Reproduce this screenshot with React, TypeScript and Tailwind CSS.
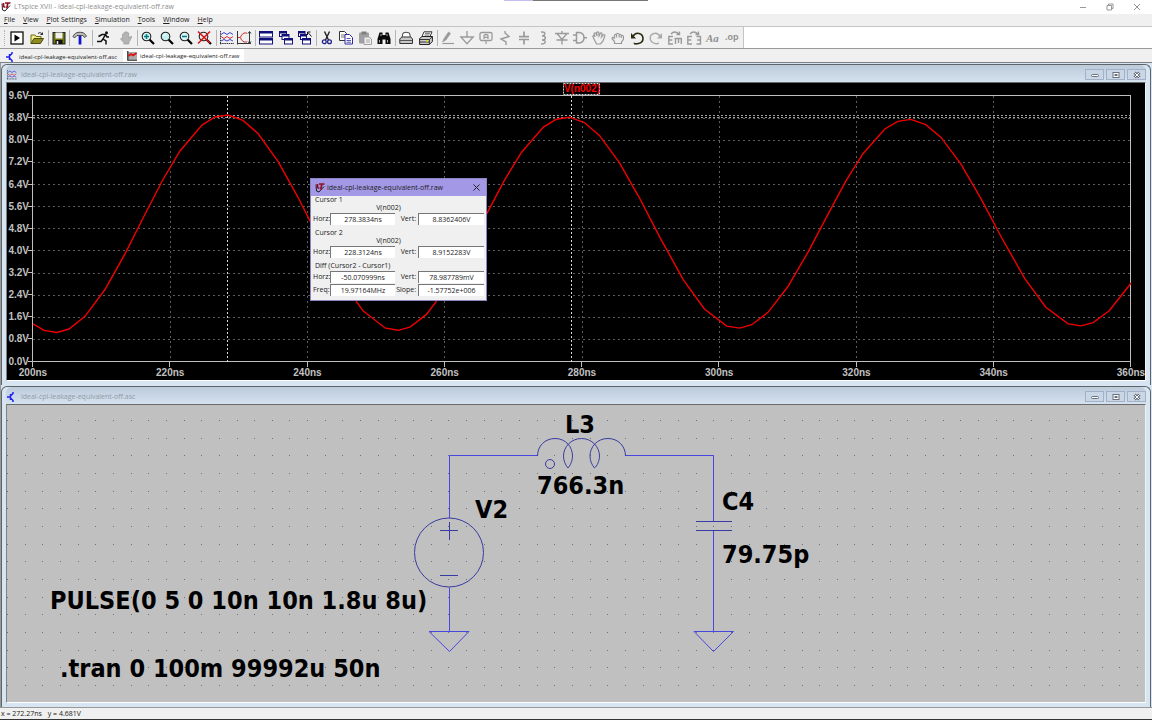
import React from 'react';

const menus = ['File', 'View', 'Plot Settings', 'Simulation', 'Tools', 'Window', 'Help'];

const readouts = [
  { title: 'Cursor 1', trace: 'V(n002)', rows: [['Horz:', '278.3834ns', 'Vert:', '8.8362406V']] },
  { title: 'Cursor 2', trace: 'V(n002)', rows: [['Horz:', '228.3124ns', 'Vert:', '8.9152283V']] },
  {
    title: 'Diff (Cursor2 - Cursor1)',
    trace: '',
    rows: [
      ['Horz:', '-50.070999ns', 'Vert:', '78.987789mV'],
      ['Freq:', '19.97164MHz', 'Slope:', '-1.57752e+006'],
    ],
  },
];

const G = '#9a9a9a';
const NAVY = '#10107a';

function Lens({ fill = '#d8f4f4' }: { fill?: string }) {
  return (
    <>
      <path d="M8.5 8.5l4.5 4.5" stroke="#000" strokeWidth="2.2" />
      <circle cx="5.5" cy="5.5" r="4.3" fill={fill} stroke="#222" strokeWidth="1.1" />
    </>
  );
}

function Win({ x, y, w, h }: { x: number; y: number; w: number; h: number }) {
  return (
    <>
      <rect x={x} y={y} width={w} height={h} fill="#fff" stroke={NAVY} strokeWidth="1" />
      <rect x={x} y={y} width={w} height="2" fill={NAVY} />
    </>
  );
}

function Waves() {
  return (
    <>
      <path d="M.5 0v13.5M0 12.5h14" stroke="#333" strokeDasharray="1.500 .7" />
      <path d="M1 3.500l3-2 3 2 3-2 3 2" stroke="#4040d0" />
      <path d="M1 5.500l3 2 3-2 3 2 3-2" stroke="#e03030" />
      <path d="M1 10l3-1.500 3 1.500 3-1.500 3 1.500" stroke="#4040d0" />
    </>
  );
}

type Tool = { name: string; icon: React.ReactNode };

const groups: { width: string; tools: Tool[] }[] = [
  {
    width: 'w-[42px]',
    tools: [
      { name: 'Run', icon: <><rect x="1" y="1" width="12" height="12" fill="#fff" stroke="#111" strokeWidth="1.300" /><path d="M4.500 3.500l5.500 3.500-5.500 3.500z" fill="#000" /></> },
      { name: 'Open', icon: <><path d="M1 12.500V4h4l1 1.500h5v2" fill="#f4ee90" stroke="#6a6a10" /><path d="M1 12.500l3-5h9.500l-3 5z" fill="#8c8c20" stroke="#4a4a08" /><path d="M8 2.500c2-1.500 3-1 4 .8M12.500 1.500v2h-2" stroke="#222" /></> },
    ],
  },
  {
    width: 'w-[21px]',
    tools: [{ name: 'Save', icon: <><rect x="1" y="1.500" width="12" height="11.500" fill="#6f7010" stroke="#222" /><rect x="3.500" y="1.500" width="7" height="6" fill="#f0f0f0" /><rect x="3.500" y="9" width="7" height="4" fill="#111" /><path d="M5.500 10v3" stroke="#eee" strokeWidth="1.500" /></> }],
  },
  {
    width: 'w-[23px]',
    tools: [{ name: 'Control Panel', icon: <><path d="M0 5.500C2 1.500 5 .8 9 1.500c2 .2 3 1.500 4.500 3.500l-1.500 1.500-2.500-2H4L1.500 7z" fill="#bbb" stroke="#222" strokeWidth=".8" /><path d="M7 5v8.500" stroke="#1515d0" strokeWidth="2.800" /></> }],
  },
  {
    width: 'w-[45px]',
    tools: [
      { name: 'Run simulation', icon: <><circle cx="10.500" cy="1.800" r="1.500" fill="#111" /><path d="M9.500 3.500L7 8l3 2v3.500M7 8l-2 2.500H1M2.500 5.500L6 3.500h3.500l1.500 2.500h2" stroke="#111" strokeWidth="1.500" /></> },
      { name: 'Halt', icon: <path d="M3.500 8V3.200q.7-1 1.400 0V1.700q.8-1 1.600 0V1q.8-1 1.600 0v1q.8-1 1.600 0v5.500l1.500-2q1.500-.6 1.600.5l-3 5.500V13h-5v-1.500L1.500 8q.5-1.600 2 0z" fill="#b4b4b4" stroke="#999" strokeWidth=".7" /> },
    ],
  },
  {
    width: 'w-[79px]',
    tools: [
      { name: 'Zoom in', icon: <><Lens /><path d="M3 5.500h5M5.500 3v5" stroke="#008080" strokeWidth="1.500" /></> },
      { name: 'Pan', icon: <><Lens fill="#c6f0f0" /><path d="M3.500 5q.7-1.500 2.500-2" stroke="#fff" /></> },
      { name: 'Zoom out', icon: <><Lens /><path d="M3 5.500h5" stroke="#008080" strokeWidth="1.500" /></> },
      { name: 'Zoom to fit', icon: <><Lens fill="#e8e8e8" /><path d="M0 .5l12 11.500M12 .5L0 12.500" stroke="#e01010" strokeWidth="1.500" /></> },
    ],
  },
  {
    width: 'w-[39px]',
    tools: [
      { name: 'Autorange', icon: <Waves /> },
      { name: 'Y range', icon: <><path d="M.5 0v13.500M0 12.500h14M12.500 1v11M11 2.500l1.500-2 1.500 2M11 10.500l1.500 2 1.500-2" stroke="#333" /><path d="M10 2H7Q3.500 4 3.500 6.500T7 11h3M3 6.500H1" stroke="#d03030" /></> },
    ],
  },
  {
    width: 'w-[61px]',
    tools: [
      { name: 'Tile windows', icon: <><Win x={.5} y={.5} w={13} h={5.500} /><Win x={.5} y={7.500} w={13} h={5.500} /></> },
      { name: 'Cascade windows', icon: <><Win x={.5} y={.5} w={7} h={5} /><Win x={3} y={3.500} w={7} h={5} /><Win x={5.500} y={7.500} w={8} h={5.500} /></> },
      { name: 'Close windows', icon: <><Win x={.5} y={.5} w={6.500} h={5} /><Win x={2.500} y={3.500} w={6} h={5} /><Win x={4.500} y={7.500} w={8} h={5.500} /><path d="M13.500 5.500L10 1.500M9.500 4V1h3" stroke="#111" /></> },
    ],
  },
  {
    width: 'w-[79px]',
    tools: [
      { name: 'Cut', icon: <><path d="M4.500.5l4 8.500M9.500.5l-4 8.500" stroke="#222" strokeWidth="1.400" /><circle cx="4.300" cy="10.800" r="1.900" stroke="#20208c" strokeWidth="1.300" /><circle cx="9.500" cy="10.800" r="1.900" stroke="#20208c" strokeWidth="1.300" /></> },
      { name: 'Copy', icon: <><path d="M.5.5h5l2 2v7h-7z" fill="#fff" stroke="#333" /><path d="M2 4h4M2 6h4" stroke="#555" strokeWidth=".8" /><path d="M6 3.500h4.500l3 3V13H6z" fill="#fff" stroke="#2c2ca0" /><path d="M7.500 7.500h4M7.500 9.500h4.500M7.500 11.200h4.500" stroke="#2c2ca0" strokeWidth=".8" /></> },
      { name: 'Paste', icon: <><rect x="1" y="1.500" width="10" height="11" rx="1" fill="#a0a0a0" /><rect x="3.500" y=".5" width="5" height="3" fill="#808080" /><path d="M6 6h5l2.500 2v5.500H6z" fill="#eee" stroke="#a0a0a0" /><path d="M8 9h4M8 11h4" stroke="#999" strokeWidth=".8" /></> },
      { name: 'Find', icon: <><path d="M2.500 1.500h3V4h3V1.500h3l2 6.500v5H8.500V8.500h-3V13H.5V8z" fill="#0a0a0a" /><path d="M2.500 9v2.500M10.500 9v2.500M4 3v2M10 3v2" stroke="#ddd" strokeWidth=".8" /></> },
    ],
  },
  {
    width: 'w-[42px]',
    tools: [
      { name: 'Page setup', icon: <><path d="M3 6.500l1-4.500q3-1.500 6.500 0l1 4.500" fill="#fff" stroke="#444" /><path d="M.8 8l2-2h9l1.700 2v4.500H.8z" fill="#c8c8c8" stroke="#333" /><path d="M1 9.500h12" stroke="#555" /></> },
      { name: 'Print', icon: <><path d="M3 5.500L5 .8h8l-2 4.700" fill="#fff" stroke="#333" /><path d="M6 2.300h5M5.500 4h5" stroke="#444" strokeWidth=".8" /><path d="M.6 7.500l2.500-2h10.300v5l-3 3H.6z" fill="#ccc" stroke="#222" /><path d="M.6 8.500h9.800v5M10.400 8.500l3-3M1 11h9" stroke="#222" strokeWidth=".9" /><path d="M7 10h2" stroke="#d8d800" strokeWidth="1.600" /></> },
    ],
  },
  {
    width: 'w-[305px]',
    tools: [
      { name: 'Wire', icon: <><path d="M1.500 11L3 7.500 7.500 1l2 1.500L5 9z" fill={G} stroke={G} strokeWidth=".6" /><path d="M1.500 12.500H13" stroke={G} strokeWidth="1.200" /></> },
      { name: 'Ground', icon: <path d="M7 0v6M.8 6h12.400L7 12.800z" stroke={G} strokeWidth="1.300" /> },
      { name: 'Label net', icon: <><rect x="1" y="1.500" width="12" height="8" rx="1.500" stroke={G} strokeWidth="1.300" /><path d="M5 8V4.500q2-2 4 0V8M5 6.300h4M7 9.500V13" stroke={G} strokeWidth="1.200" /></> },
      { name: 'Resistor', icon: <path d="M7 0v2l4 3.500L3 8l5 3v3" stroke={G} strokeWidth="1.400" /> },
      { name: 'Capacitor', icon: <path d="M7 .5v5M2 5.700h10M2 8.500h10M7 8.500v5" stroke={G} strokeWidth="1.700" /> },
      { name: 'Inductor', icon: <path d="M5 1c5-.5 5 3.500 1 3.800C10.500 5 10.500 9 6 9c4.500 0 4.500 4-1 4" stroke={G} strokeWidth="1.400" /> },
      { name: 'Diode', icon: <path d="M0 2.500h14M2 2.500l5 6 5-6M1.500 9h11M7 9v4.500M7 0v2.500" stroke={G} strokeWidth="1.400" /> },
      { name: 'Component', icon: <path d="M0 4h3.500M0 9.500h3.500M3.500 1.500h3q4.500 1 4.500 5.200T6.500 12h-3zM11 6.800h3" stroke={G} strokeWidth="1.500" /> },
      { name: 'Move', icon: <path d="M2 8L.8 5.500Q1 4 2.500 5L3 6 2 2.500Q3 1 4 2.500L5 5l-.3-3.500Q6 .2 6.800 1.800L7 5l1.500-3Q10 1.500 10 3L9.500 6l2-2.500Q13.200 3.500 12.800 5L11 10l-2.500 3h-4z" stroke={G} strokeWidth="1.200" /> },
      { name: 'Drag', icon: <path d="M3.500 12.500v-2L1 7.500q.2-2 2.500-.5V4q1-1.500 2 0 0-2 1.500-1.500T8.200 4q1-1.500 2 0v1q2-1.200 2.200.5v3L10.500 11v1.500zM5.500 4v2.500M8.200 4v2.500M10.200 5v2" stroke={G} strokeWidth="1.200" /> },
      { name: 'Undo', icon: <><path d="M3 5.500q2-4 6-3t4 5-4.500 5-4-.8" stroke="#2a2a10" strokeWidth="1.600" /><path d="M1 2v5.500h5z" fill="#2a2a10" /></> },
      { name: 'Redo', icon: <><path d="M11 5.500q-2-4-6-3T1.200 7.300t4.300 5 4-.8" stroke="#aaa" strokeWidth="1.400" /><path d="M13 2v5.500H8z" fill="#aaa" /></> },
      { name: 'Rotate', icon: <path d="M5 5.500H.8v7.500H5M.8 9h3.500M6.500 7.500h7.500M7.500 7.500V13M10.500 7.500V12M13.300 7.500V13M3 3q3.500-4 8 0M11.500.5v3h-3" stroke={G} strokeWidth="1.400" /> },
      { name: 'Mirror', icon: <path d="M5 5.500H.8v7.500H5M.8 9h3.500M9.500 5.500h4V13h-4M10.200 9h3.300M3 3q3.500-4 8 0M11.500.5v3h-3" stroke={G} strokeWidth="1.400" /> },
      { name: 'Text', icon: <text x="0" y="11" fontSize="11" fontWeight="700" fontStyle="italic" fontFamily="'Liberation Serif', serif" fill="#909090">Aa</text> },
      { name: 'SPICE directive', icon: <text x="0" y="9" fontSize="9" fontWeight="700" fontFamily="'Liberation Sans', sans-serif" fill="#909090">.op</text> },
    ],
  },
];

function LtLogo() {
  return (
    <svg className="h-[10px] w-[10px] shrink-0" viewBox="0 0 10 10" fill="none" aria-hidden="true">
      <path d="M1 1.500L1.500 8l2.500 1 5-5.500" stroke="#222" strokeWidth="1" />
      <path d="M2.500 1v4M4 1h5.500M6.800 1l-1 5.500M2.500 5h2" stroke="#8c1020" strokeWidth="1.700" />
    </svg>
  );
}

function SchematicIcon() {
  return (
    <svg className="h-[10px] w-[10px] shrink-0" viewBox="0 0 10 10" fill="none" aria-hidden="true">
      <path d="M0 5h3.500M3.500 2v6M3.500 4L6 1.500V0M3.500 6L6 8.500V10" stroke="#2020f0" strokeWidth="1.500" />
    </svg>
  );
}

function TraceIcon() {
  return (
    <svg className="h-[10px] w-[10px] shrink-0" viewBox="0 0 14 14" fill="none" aria-hidden="true">
      <Waves />
    </svg>
  );
}

function ChildWindow({ title, icon, children }: { title: string; icon: React.ReactNode; children: React.ReactNode }) {
  return (
    <section className="rounded-t-md border border-b-0 border-[#5f6468] bg-[#d7e4f2] px-1 pb-1">
      <header className="flex h-[17px] items-center gap-1 rounded-t-md bg-linear-to-b from-[#bccad9] to-[#d5e2f0] pt-0.5 pl-px">
        {icon}
        <h2 className="flex-1 text-[7px] leading-[10px] text-[#8f9aa6]">{title}</h2>
        <div className="flex gap-0.5">
          {['Minimize', 'Restore', 'Close'].map((name) => (
            <button key={name} aria-label={name} className="flex h-[11px] w-[19px] items-center justify-center border border-[#a3b1c6] bg-[#c9d6e5]">
              <svg className="h-2 w-2" viewBox="0 0 8 8" fill="#fff" stroke="#69717e" strokeWidth="1">
                {name === 'Minimize' && <rect x=".5" y="3.500" width="7" height="2" rx="1" />}
                {name === 'Restore' && <><rect x="1" y="1.500" width="6" height="5" /><rect x="3" y="3.500" width="2" height="1" /></>}
                {name === 'Close' && <><path d="M1.500 1.500l5 5M6.500 1.500l-5 5" strokeWidth="3" /><path d="M1.500 1.500l5 5M6.500 1.500l-5 5" stroke="#fff" /></>}
              </svg>
            </button>
          ))}
        </div>
      </header>
      <div className="border border-t-[#6b6b6b] border-r-[#eef3f8] border-b-white border-l-[#808080]">{children}</div>
    </section>
  );
}

// plot geometry, in svg units
const LEFT = 33;
const TOP = 96;
const XSTEP = 137.25;
const YSTEP = 22.125;
const BOTTOM = TOP + YSTEP * 12;
const RIGHT = LEFT + XSTEP * 8;
const PERIOD = 49.75;

const yOf = (v: number) => BOTTOM - (v * YSTEP) / 0.8;
const volts = (ns: number) => {
  const amp = 3.915 - 0.0016 * (ns - 228.1);
  return 5 + amp * Math.cos((2 * Math.PI * (ns - 228.1)) / PERIOD);
};

// solver time points within one period, relative to the minimum
const offsets = [-13, 0, 12, 28, 48, 68, 88, 106, 123, 145, 158, 171, 186, 201, 221, 241, 262, 285, 306];
const samples = [0, 1, 2, 3]
  .flatMap((n) => offsets.map((o) => 57 + o + (n * PERIOD * XSTEP) / 20))
  .filter((x) => x > LEFT && x < RIGHT);
const trace = [LEFT, ...samples, RIGHT]
  .map((x) => `${x.toFixed(1)},${yOf(volts(200 + ((x - LEFT) * 20) / XSTEP)).toFixed(1)}`)
  .join(' ');

function Plot() {
  const ticksX = Array.from({ length: 9 }, (_, i) => i);
  const ticksY = Array.from({ length: 13 }, (_, i) => i);
  return (
    <svg className="block w-full bg-black" viewBox="7 83 1138 297" fill="none" fontFamily="'Liberation Sans', Arial, sans-serif" fontSize="10" fontWeight="700">
      <g stroke="#5c5c5c" strokeDasharray="2 3" shapeRendering="crispEdges">
        {ticksX.slice(1, 8).map((i) => <path key={i} d={`M${LEFT + i * XSTEP} ${TOP}V${BOTTOM}`} />)}
        {ticksY.slice(1, 12).map((i) => <path key={i} d={`M${LEFT} ${TOP + i * YSTEP}H${RIGHT}`} />)}
      </g>
      <g stroke="#c0c0c0" shapeRendering="crispEdges">
        <rect x={LEFT - 0.5} y={TOP - 0.5} width={RIGHT - LEFT} height={BOTTOM - TOP} />
        {ticksX.map((i) => <path key={i} d={`M${LEFT + i * XSTEP - 0.5} ${BOTTOM}v5`} />)}
        {ticksY.map((i) => <path key={i} d={`M${LEFT - 5} ${TOP + i * YSTEP - 0.5}h5`} />)}
      </g>
      <g fill="#c0c0c0">
        {ticksX.map((i) => <text key={i} x={LEFT + i * XSTEP} y={BOTTOM + 14} textAnchor="middle">{200 + i * 20}ns</text>)}
        {ticksY.map((i) => <text key={i} x={LEFT - 4} y={TOP + i * YSTEP + 3} textAnchor="end">{Math.abs(9.6 - i * 0.8).toFixed(1)}V</text>)}
      </g>
      <g stroke="#d8d8d8" shapeRendering="crispEdges">
        <path d={`M227.500 ${TOP}V${BOTTOM}M571.500 ${TOP}V${BOTTOM}`} strokeDasharray="2 2" />
        <path d={`M${LEFT} 115.500H${RIGHT}M${LEFT} 117.500H${RIGHT}`} stroke="#a0a0a0" strokeDasharray="2 2" />
      </g>
      <polyline points={trace} stroke="#f00000" strokeWidth="1.400" />
      <rect x="563.500" y="83.500" width="36" height="11" stroke="#d0d0d0" strokeDasharray="2 1" />
      <text x="582" y="92" textAnchor="middle" fill="#ff0000">V(n002)</text>
    </svg>
  );
}

function CursorDialog() {
  return (
    <div role="dialog" aria-label="Cursor readout" className="absolute top-[95px] left-[303px] w-[177px] border border-[#8d84c4] bg-[#f0f0f0] text-[7px] leading-[8px] text-[#222]">
      <div className="flex h-[17px] items-center gap-0.5 bg-[#a298e6] px-1">
        <LtLogo />
        <span className="flex-1">ideal-cpl-leakage-equivalent-off.raw</span>
        <button aria-label="Close" className="p-0.5">
          <svg className="h-[7px] w-[7px]" viewBox="0 0 7 7" stroke="#222"><path d="M.5.5l6 6M6.500.5l-6 6" /></svg>
        </button>
      </div>
      {readouts.map((group) => (
        <fieldset key={group.title} className="px-0.5 pb-1">
          <legend className="ml-0.5">{group.title}</legend>
          {group.trace && <div className="pr-5 text-center">{group.trace}</div>}
          {group.rows.map(([h, hv, v, vv]) => (
            <div key={h} className="grid grid-cols-[17px_65px_23px_66px] items-center pt-px">
              <label htmlFor={group.title + h}>{h}</label>
              <input id={group.title + h} readOnly value={hv} className="h-3 w-full border-t border-l border-[#777] bg-white text-center" />
              <label htmlFor={group.title + v} className="pr-0.5 text-right">{v}</label>
              <input id={group.title + v} readOnly value={vv} className="h-3 w-full border-t border-l border-[#777] bg-white text-center" />
            </div>
          ))}
        </fieldset>
      ))}
    </div>
  );
}

// snap grid: one short dash per grid point
const dots = Array.from({ length: 16 }, (_, r) =>
  Array.from({ length: 65 }, (_, c) => `M${Math.round(7 + c * 17.656)} ${Math.round(420 + r * 17.667) + 0.5}h1`).join('')
).join('');

function Schematic() {
  return (
    <svg className="block w-full bg-[#c0c0c0]" viewBox="7 405 1138 297" fill="none">
      <path d={dots} stroke="#707070" shapeRendering="crispEdges" />
      <g stroke="#4848e0">
        <path d="M537.500 455.500H449.500V518M449.500 587.500V632M625.500 455.500H713.500V522M713.500 531V632" />
        <path d="M429 631.500h40l-19.500 20zM694 631.500h39.500l-20 20z" />
      </g>
      <g stroke="#3a3aa4">
        <circle cx="449" cy="552.500" r="34.500" />
        <path d="M440 530.500h18M449.500 522v18M440 575.500h18M696 521.500h36M696 530.500h36" />
        <path d="M537.500 456C537.500 446 545 438.500 555 438.500C566 438.500 572.500 447 572.500 456C572.500 461 570 466 568 468C565.500 465 563.500 461 563.500 456C563.500 447 571 438.500 581.500 438.500C592 438.500 599.500 447 599.500 456C599.500 461 597 466 594.500 468C592 465 590 461 590 456C590 447 597 438.500 608 438.500C618 438.500 625.500 446 625.500 456" />
        <circle cx="550" cy="464" r="4.500" />
      </g>
      <g fill="#000" fontSize="25" fontWeight="700" fontFamily="'DejaVu Sans Condensed', 'Noto Sans', sans-serif">
        <text x="565" y="433">L3</text>
        <text x="537" y="494">766.3n</text>
        <text x="475" y="518">V2</text>
        <text x="722" y="510">C4</text>
        <text x="722" y="563">79.75p</text>
        <text x="50" y="609">PULSE(0 5 0 10n 10n 1.8u 8u)</text>
        <text x="60" y="677">.tran 0 100m 99992u 50n</text>
      </g>
    </svg>
  );
}

export default function App() {
  return (
    <div className="flex min-h-screen flex-col bg-[#f0f0f0] font-['Open_Sans','Noto_Sans',sans-serif] text-[7px] leading-[10px] text-[#222]">
      <header className="relative flex h-[14px] items-center gap-[3px] bg-white pl-px">
        <div className="absolute top-0 left-[504px] flex h-px w-36">
          <span className="w-[29px] bg-[#c4bdf0]" />
          <span className="flex-1 bg-[#777]" />
        </div>
        <LtLogo />
        <h1 className="flex-1 text-[#8e8e8e]">LTspice XVII - ideal-cpl-leakage-equivalent-off.raw</h1>
        <div className="flex gap-[19px] pr-[11px]">
          {['Minimize', 'Restore', 'Close'].map((name) => (
            <button key={name} aria-label={name}>
              <svg className="h-2 w-2" viewBox="0 0 8 8" fill="none" stroke="#999">
                {name === 'Minimize' && <path d="M1 4.500h6" />}
                {name === 'Restore' && <path d="M1 2.500h4.500V7H1zM2.500 2.500v-1.500H7v4.500H5.500" />}
                {name === 'Close' && <path d="M1 1l6 6M7 1L1 7" />}
              </svg>
            </button>
          ))}
        </div>
      </header>

      <nav className="flex h-[13px] items-center gap-2 border-b border-[#c4c4c4] pl-1">
        {menus.map((m) => (
          <button key={m}><u>{m[0]}</u>{m.slice(1)}</button>
        ))}
      </nav>

      <div className="flex h-[22px] border-b border-[#999] bg-white">
        <div className="flex items-center border-r border-[#c4c4c4] bg-[#f0f0f0] pl-1">
          <span className="h-4 w-[3px] border-l border-dotted border-[#b0b0b0]" />
          {groups.map((g, i) => (
            <div key={i} className={`flex h-4 items-center justify-between border-r border-[#b4b4b4] pr-[3px] pl-0.5 last:border-r-0 ${g.width}`}>
              {g.tools.map((t) => (
                <button key={t.name} aria-label={t.name} title={t.name} className="flex h-4 w-4 items-center justify-center">
                  <svg className="h-[14px] w-[14px] overflow-visible" viewBox="0 0 14 14" fill="none">{t.icon}</svg>
                </button>
              ))}
            </div>
          ))}
        </div>
      </div>

      <div role="tablist" className="flex h-[14px] items-stretch gap-1 border-b border-[#808080] pl-1 text-[6px]">
        <button role="tab" aria-selected="false" className="flex items-center gap-[3px] px-0.5 pt-0.5">
          <SchematicIcon />
          ideal-cpl-leakage-equivalent-off.asc
        </button>
        <button role="tab" aria-selected="true" className="flex items-center gap-[3px] bg-white px-1">
          <svg className="h-[10px] w-[10px]" viewBox="0 0 10 10" fill="none">
            <rect x="1" y="1" width="9" height="7" fill="#aaa" />
            <path d="M.8 0v9.200H10" stroke="#222" strokeWidth="1.200" />
            <path d="M1.500 5l2.500-2 2 1.500L9.500 2" stroke="#e01010" strokeWidth="1.700" />
          </svg>
          ideal-cpl-leakage-equivalent-off.raw
        </button>
      </div>

      <main className="flex flex-1 flex-col gap-px border-b border-l border-[#999] bg-[#d7e4f2] pt-px pr-px">
        <ChildWindow title="ideal-cpl-leakage-equivalent-off.raw" icon={<TraceIcon />}>
          <div className="relative">
            <Plot />
            <CursorDialog />
          </div>
        </ChildWindow>
        <ChildWindow title="ideal-cpl-leakage-equivalent-off.asc" icon={<SchematicIcon />}>
          <Schematic />
        </ChildWindow>
      </main>

      <footer className="flex h-3 items-center gap-1.5 border-b border-[#333] pl-px">
        <span>x = 272.27ns</span>
        <span>y = 4.681V</span>
      </footer>
    </div>
  );
}
